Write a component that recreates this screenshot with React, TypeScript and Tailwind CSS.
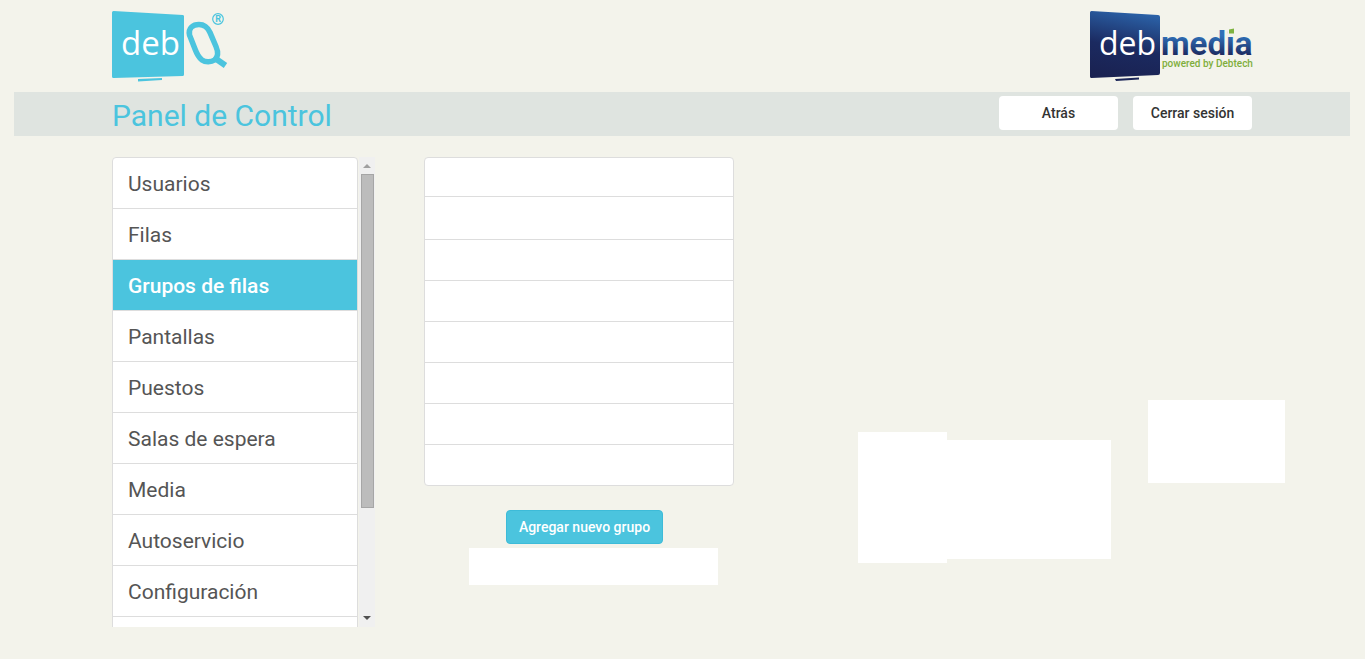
const sections = [
  "Usuarios",
  "Filas",
  "Grupos de filas",
  "Pantallas",
  "Puestos",
  "Salas de espera",
  "Media",
  "Autoservicio",
  "Configuración",
];

const groupRowHeights = [
  "h-[39px]",
  "h-[43px]",
  "h-[41px]",
  "h-[41px]",
  "h-[41px]",
  "h-[41px]",
  "h-[41px]",
  "h-[40px]",
];

function DebQLogo() {
  return (
    <svg width="116" height="74" viewBox="0 0 116 74" role="img" aria-label="debQ">
      <path d="M1.5 1 71 5q1 0 1 1.5v58q0 1.500-1.500 1.500L1.500 68Q0 68 0 66.500V2.500Q0 1 1.500 1Z" fill="#4bc4de" />
      <path d="m26 69 24-1v2l-24 1.500Z" fill="#4bc4de" />
      <text x="9" y="44.500" fontSize="33" fontWeight="500" fill="#fff" fontFamily="'Open Sans', sans-serif">deb</text>
      <path
        d="M77.500 25C76 18 81 14.500 87 14.500c5 0 8.500 2.500 11 8l6 14c3 7 1.500 11-1.500 13.500-3 2-9 2.500-12.500 0C86 47 84.500 43 83 39Z"
        fill="none"
        stroke="#4bc4de"
        strokeWidth="5.500"
      />
      <path d="m102 47.500 11.500 8" fill="none" stroke="#4bc4de" strokeWidth="6" />
      <circle cx="106" cy="9" r="5.300" fill="none" stroke="#4bc4de" strokeWidth="1.200" />
      <text x="103.200" y="12.300" fontSize="9" fontWeight="700" fill="#4bc4de" fontFamily="Roboto, sans-serif">R</text>
    </svg>
  );
}

function DebmediaLogo() {
  return (
    <svg className="overflow-visible" width="162" height="74" viewBox="0 0 162 74" role="img" aria-label="debmedia powered by Debtech">
      <defs>
        <linearGradient id="screen" x1="0.6" y1="0" x2="0.4" y2="1">
          <stop offset="0" stopColor="#2b62a8" />
          <stop offset="0.55" stopColor="#1b2a60" />
          <stop offset="1" stopColor="#1a2252" />
        </linearGradient>
        <linearGradient id="word" x1="0" y1="0" x2="0" y2="1">
          <stop offset="0.3" stopColor="#2f70b8" />
          <stop offset="0.8" stopColor="#1c2a60" />
        </linearGradient>
      </defs>
      <path d="M1.500 1 68 5q2 0 2 2v56q0 2-2 2L1.500 68Q0 68 0 66.500V2.500Q0 1 1.500 1Z" fill="url(#screen)" />
      <path d="m25 69 24-1.500v2L26 71Z" fill="#1b2557" />
      <text x="9" y="44.500" fontSize="32" fontWeight="500" fill="#fff" fontFamily="'Open Sans', sans-serif">deb</text>
      <text x="71" y="45" fontSize="33" fontWeight="700" fill="url(#word)" fontFamily="Roboto, sans-serif">media</text>
      <path d="M137.500 17h7.500v8h-7.500Z" fill="#f3f3eb" />
      <path d="m139 19.500 5-1v5h-5Z" fill="#7fb341" />
      <text x="72" y="57" fontSize="10" fontWeight="500" fill="#7fae3c" fontFamily="Roboto, sans-serif">powered by Debtech</text>
    </svg>
  );
}

function ScrollRail() {
  return (
    <div className="flex w-4 flex-col items-center bg-[#f0f0f0]" aria-hidden="true">
      <svg className="h-[17px] w-4 shrink-0" viewBox="0 0 16 17">
        <path d="m4 11 4-4 4 4Z" fill="#a0a0a0" />
      </svg>
      <div className="h-[334px] w-[13px] border border-[#a6a6a6] bg-[#bcbcbc]" />
      <svg className="mt-auto h-[17px] w-4 shrink-0" viewBox="0 0 16 17">
        <path d="m4 6 4 4 4-4Z" fill="#505050" />
      </svg>
    </div>
  );
}

export default function App() {
  return (
    <div className="min-h-screen overflow-x-hidden bg-[#f3f3eb] pr-px font-['Roboto',sans-serif] text-[#555]">
      <header>
        <div className="mx-auto flex max-w-[1140px] justify-between pt-[10px] pb-2">
          <DebQLogo />
          <DebmediaLogo />
        </div>
        <div className="mx-[14px] bg-[#dfe4e0]">
          <div className="mx-auto flex h-11 max-w-[1140px] items-center justify-between">
            <h1 className="pt-1 text-[30px] leading-10 text-[#4bc4de]">Panel de Control</h1>
            <div className="flex gap-[15px] pb-[2px] text-sm font-medium text-[#333]">
              <button type="button" className="h-[34px] w-[119px] rounded bg-white">Atrás</button>
              <button type="button" className="h-[34px] w-[119px] rounded bg-white">Cerrar sesión</button>
            </div>
          </div>
        </div>
      </header>

      <main className="mx-auto flex max-w-[1140px] items-start pt-[21px]">
        <nav className="flex h-[470px] shrink-0 overflow-hidden">
          <ul className="h-max w-[246px] rounded-t border border-[#ddd] bg-white text-[21px]">
            {sections.map((name) => (
              <li key={name} className="border-b border-[#ddd]">
                <a
                  href="#"
                  className={
                    name === "Grupos de filas"
                      ? "flex h-[50px] items-center bg-[#4bc4de] px-[15px] pt-1 font-medium text-white"
                      : "flex h-[50px] items-center px-[15px] pt-1"
                  }
                >
                  {name}
                </a>
              </li>
            ))}
            <li className="h-[50px]" />
          </ul>
          <div className="flex pl-px">
            <ScrollRail />
          </div>
        </nav>

        <section className="ml-[49px] flex w-[310px] shrink-0 flex-col">
          <ul className="divide-y divide-[#ddd] rounded border border-[#ddd] bg-white">
            {groupRowHeights.map((height, i) => (
              <li key={i} className={height} />
            ))}
          </ul>
          <button
            type="button"
            className="mt-6 ml-[82px] h-[34px] w-[157px] rounded border border-[#3dbbd8] bg-[#4bc4de] text-sm font-medium text-white"
          >
            Agregar nuevo grupo
          </button>
          <div className="mt-1 ml-[45px] h-[37px] w-[249px] bg-white" />
        </section>

        <section className="ml-[124px] flex shrink-0 items-start pt-[243px]">
          <div className="mt-8 h-[131px] w-[89px] bg-white" />
          <div className="mt-10 h-[119px] w-[164px] bg-white" />
          <div className="ml-[37px] h-[83px] w-[137px] bg-white" />
        </section>
      </main>
    </div>
  );
}
